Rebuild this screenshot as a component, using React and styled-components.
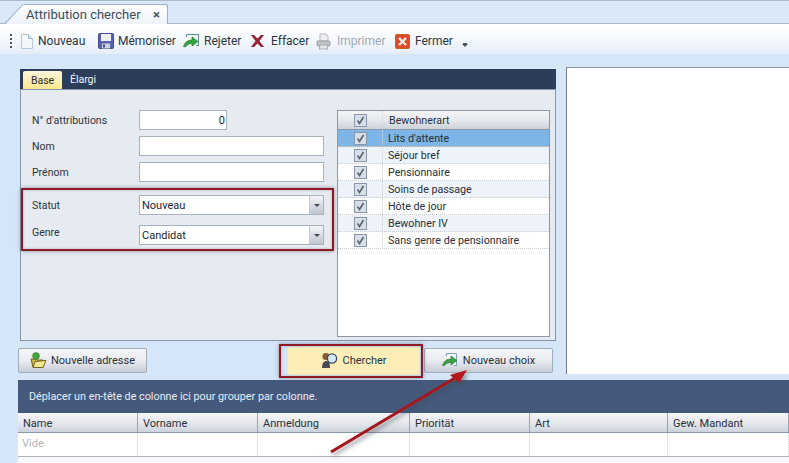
import React from "react"
import styled, { createGlobalStyle } from "styled-components"

const Global = createGlobalStyle`
  html, body { margin: 0; padding: 0; }
  body {
    width: 789px;
    height: 463px;
    overflow: hidden;
    background: #d6e6f9;
    font-family: Roboto, "Liberation Sans", Arial, sans-serif;
    font-size: 11px;
    color: #1e2530;
  }
`

const Page = styled.div`
  position: relative;
  width: 789px;
  height: 463px;
  overflow: hidden;
  display: flex;
  flex-direction: column;
`

const TabStrip = styled.div`
  height: 24px;
  flex: none;
  box-sizing: border-box;
  border-top: 1px solid #a9b8cb;
  border-bottom: 1px solid #a7b8cc;
  background: #d9e7f7;
  padding: 3px 0 0 24px;
`

const DocTab = styled.div`
  width: 144px;
  height: 20px;
  box-sizing: border-box;
  position: relative;
  display: flex;
  align-items: center;
  justify-content: space-between;
  padding: 0 7px 0 2px;
  font-size: 13px;
  color: #3c4a5c;
  border: 1px solid #9fb0c6;
  border-left: none;
  border-bottom: none;
  border-radius: 0 3px 0 0;
  background: linear-gradient(#ffffff, #eef4fb);
  &::before {
    content: "";
    position: absolute;
    left: -18px;
    top: -1px;
    width: 18px;
    height: 20px;
    background: linear-gradient(#ffffff, #eef4fb);
    clip-path: polygon(0 100%, 100% 0, 100% 100%);
  }
  &::after {
    content: "";
    position: absolute;
    left: -19px;
    bottom: 0;
    width: 27px;
    height: 1px;
    background: #9fb0c6;
    transform: rotate(-46deg);
    transform-origin: left bottom;
  }
`

const CloseMark = styled.span`
  font-size: 13px;
  color: #46525f;
  font-weight: bold;
`

const Toolbar = styled.div`
  height: 30px;
  flex: none;
  box-sizing: border-box;
  display: flex;
  align-items: center;
  padding: 4px 0 0 10px;
  background: linear-gradient(#ffffff 0%, #f6f9fd 50%, #e4edf8 100%);
`

const Grip = styled.span`
  width: 2px;
  height: 14px;
  margin-right: 8px;
  background: repeating-linear-gradient(#4a5563 0 2px, transparent 2px 4px);
`

const ToolItem = styled.div`
  display: flex;
  align-items: center;
  gap: ${({ $inner }) => $inner}px;
  width: ${({ $w }) => $w}px;
  flex: none;
  font-size: 12px;
  color: ${({ $off }) => ($off ? "#a2a8af" : "#2b3440")};
`

const Overflow = styled.span`
  margin: 8px 0 0 7px;
  width: 0;
  height: 0;
  border: 3px solid transparent;
  border-top: 3px solid #4a5563;
  border-bottom: none;
  box-shadow: 0 -2px 0 -1px #4a5563;
`

const Content = styled.div`
  flex: 1;
  display: flex;
  flex-direction: column;
  padding: 13px 0 0 18px;
`

const TopRow = styled.div`
  display: grid;
  grid-template-columns: 536px 223px;
  column-gap: 10px;
  margin-left: 2px;
  height: 307px;
`

const SearchCol = styled.div`
  display: flex;
  flex-direction: column;
  padding-top: 2px;
`

const Panel = styled.div`
  height: 272px;
  box-sizing: border-box;
  border: 1px solid #8496ad;
  border-top: none;
  background: #e6ebf1;
  display: flex;
  flex-direction: column;
`

const PanelTabs = styled.div`
  height: 20px;
  flex: none;
  margin: 0 -1px;
  background: #2b3d59;
  display: flex;
  align-items: flex-end;
  padding-left: 3px;
  box-shadow: 0 1px 0 #8496ad;
`

const PanelTab = styled.div`
  height: ${({ $active }) => ($active ? 18 : 20)}px;
  width: ${({ $w }) => $w}px;
  margin-right: ${({ $active }) => ($active ? 8 : 0)}px;
  box-sizing: border-box;
  display: flex;
  align-items: center;
  justify-content: center;
  font-size: 10.5px;
  border-radius: 2px 2px 0 0;
  color: ${({ $active }) => ($active ? "#2a2a2a" : "#f2f5f9")};
  background: ${({ $active }) =>
    $active ? "linear-gradient(#fff7dc, #fde690)" : "transparent"};
`

const PanelBody = styled.div`
  flex: 1;
  display: flex;
  justify-content: space-between;
  padding: 21px 5px 3px 11px;
`

const Form = styled.div`
  width: 293px;
  display: flex;
  flex-direction: column;
`

const FormRow = styled.div`
  display: flex;
  align-items: center;
  height: 20px;
  margin-bottom: ${({ $after }) => $after}px;
`

const Label = styled.label`
  width: 107px;
  flex: none;
  font-size: 10.5px;
  color: #2b3440;
  padding-top: ${({ $raise }) => ($raise ? 0 : 1)}px;
  padding-bottom: ${({ $raise }) => $raise || 0}px;
`

const Field = styled.div`
  width: ${({ $w }) => $w}px;
  height: 20px;
  box-sizing: border-box;
  border: 1px solid #a8b2be;
  background: #fff;
  display: flex;
  align-items: center;
  justify-content: ${({ $right }) => ($right ? "flex-end" : "flex-start")};
  padding: 0 ${({ $right }) => ($right ? 1 : 2)}px;
  font-size: 11px;
  color: #1e2530;
`

const Combo = styled(Field)`
  width: 185px;
  justify-content: space-between;
  padding: 0 0 0 2px;
`

const ComboBtn = styled.span`
  width: 13px;
  height: 18px;
  background: linear-gradient(#f3f5f8, #bfc6d0);
  border-left: 1px solid #c3cad3;
  display: flex;
  align-items: center;
  justify-content: center;
  &::after {
    content: "";
    border: 3px solid transparent;
    border-top: 3px solid #3f4854;
    border-bottom: none;
  }
`

const CheckList = styled.div`
  width: 213px;
  box-sizing: border-box;
  border: 1px solid #8c98a8;
  background: #fff;
`

const ListRow = styled.div`
  display: flex;
  align-items: center;
  height: 17px;
  box-sizing: border-box;
  background: ${({ $sel, $alt }) =>
    $sel ? "#7db5e6" : $alt ? "#eef3f9" : "#fff"};
  border-bottom: 1px dotted #c9ced5;
  font-size: 10.7px;
  color: #27303b;
`

const ListHead = styled(ListRow)`
  height: 19px;
  background: linear-gradient(#f4f5f7 0%, #e6e9ee 50%, #ccd2da 100%);
  border-bottom: 1px solid #8c98a8;
`

const CheckCell = styled.div`
  width: 45px;
  flex: none;
  height: 100%;
  display: flex;
  justify-content: center;
  align-items: center;
  padding-left: 1px;
  box-sizing: border-box;
  border-right: 1px dotted #d2d7dd;
`

const ListText = styled.span`
  padding-left: ${({ $head }) => ($head ? 6 : 5)}px;
`

const ButtonRow = styled.div`
  display: flex;
  align-items: center;
  height: 25px;
  margin: 7px 0 0 -2px;
`

const Btn = styled.div`
  width: ${({ $w }) => $w}px;
  height: ${({ $hot }) => ($hot ? 28 : 25)}px;
  margin-left: ${({ $ml }) => $ml}px;
  box-sizing: border-box;
  display: flex;
  align-items: center;
  justify-content: center;
  gap: 4px;
  font-size: 11px;
  color: #27303b;
  border: ${({ $hot }) => ($hot ? "none" : "1px solid #a3adba")};
  border-radius: 2px;
  background: ${({ $hot }) =>
    $hot
      ? "#fdeeb8"
      : "linear-gradient(#f5f6f8 0%, #e9ebef 50%, #c8cdd5 100%)"};
`

const WhitePane = styled.div`
  background: #fff;
  border-left: 1px solid #6d7a8b;
  border-top: 1px solid #8b97a6;
  height: 307px;
  box-sizing: border-box;
`

const Grid = styled.div`
  margin-top: 6px;
  flex: 1;
  background: #f7f9fc;
`

const GroupBar = styled.div`
  height: 33px;
  background: #44597c;
  color: #e8edf4;
  display: flex;
  align-items: center;
  padding: 0 0 1px 11px;
  box-sizing: border-box;
  font-size: 10.8px;
`

const GridHead = styled.div`
  height: 20px;
  box-sizing: border-box;
  display: flex;
  background: linear-gradient(#f4f5f7 0%, #e6e9ee 50%, #ccd3dc 100%);
  border-bottom: 1px solid #8c98a8;
`

const HeadCell = styled.div`
  width: ${({ $w }) => $w}px;
  flex: none;
  box-sizing: border-box;
  display: flex;
  align-items: center;
  padding: 1px 0 0 5px;
  font-size: 11px;
  color: #27303b;
  border-right: 1px solid #9aa5b2;
`

const GridRow = styled.div`
  height: 24px;
  display: flex;
  background: #fff;
  border-bottom: 1px solid #aeb6c0;
  box-sizing: border-box;
`

const RowCell = styled.div`
  width: ${({ $w }) => $w}px;
  flex: none;
  box-sizing: border-box;
  border-right: 1px dotted #ccd1d8;
  padding: 4px 0 0 4px;
  font-size: 11px;
  color: #b0b5bb;
`

// red marks added over the screenshot
const Mark = styled.div`
  position: absolute;
  left: ${({ $x }) => $x}px;
  top: ${({ $y }) => $y}px;
  width: ${({ $w }) => $w}px;
  height: ${({ $h }) => $h}px;
  box-sizing: border-box;
  border: 2px solid #8e1a24;
  box-shadow: 0 0 4px rgba(70, 80, 90, 0.6), inset 0 0 3px rgba(70, 80, 90, 0.35);
  pointer-events: none;
`

const ArrowLayer = styled.svg`
  position: absolute;
  left: 0;
  top: 0;
  pointer-events: none;
`

const Check = () => (
  <svg width="13" height="13" viewBox="0 0 13 13">
    <rect x="0.5" y="0.5" width="12" height="12" fill="#d9dfe9" stroke="#8a97a8" />
    <path d="M3.5 6.5l2 3 4-6.5" fill="none" stroke="#59636f" strokeWidth="1.6" />
  </svg>
)

const IconNew = () => (
  <svg width="14" height="17" viewBox="0 0 14 17">
    <path d="M1.5 1.5h7l4 4v10h-11z" fill="#f3f7fc" stroke="#b4c7de" />
    <path d="M8.5 1.5v4h4" fill="#d6e3f3" stroke="#a4bad6" />
  </svg>
)

const IconSave = () => (
  <svg width="16" height="16" viewBox="0 0 16 16">
    <rect x="0.5" y="0.5" width="15" height="15" rx="1" fill="#5a64ae" stroke="#3f4788" />
    <rect x="3" y="1" width="10" height="7" fill="#eef0f8" />
    <rect x="4" y="10.5" width="8" height="5" fill="#d0d3dc" />
    <rect x="5" y="11.5" width="2" height="3" fill="#3e4a85" />
  </svg>
)

const IconReject = () => (
  <svg width="17" height="15" viewBox="0 0 17 15">
    <path d="M3.5 3V.5h12v11H13" fill="#eef5ee" stroke="#5b8a9e" />
    <path d="M.5 12.5C2 8 5 6 9 6V3l6 4.5L9 12V9.5c-3 0-5 1-6.5 3.5z" fill="#37a23f" stroke="#1c6b26" strokeWidth="0.6" />
  </svg>
)

const IconDelete = () => (
  <svg width="15" height="14" viewBox="0 0 15 14">
    <path d="M1 1h3l3.5 3.5L11 1h3l-4.5 6 4.5 6h-3L7.5 9.5 4 13H1l4.5-6z" fill="#98243a" />
  </svg>
)

const IconPrint = () => (
  <svg width="15" height="17" viewBox="0 0 15 17">
    <path d="M4 1h6l2 2v5H4z" fill="#eceef0" stroke="#b3b7bb" />
    <rect x="1" y="8" width="13" height="5" rx="1" fill="#bfc3c7" stroke="#9a9ea3" />
    <rect x="3.5" y="12" width="8" height="4" fill="#e4e6e8" stroke="#a9adb2" />
  </svg>
)

const IconClose = () => (
  <svg width="15" height="15" viewBox="0 0 15 15">
    <rect x="0.5" y="0.5" width="14" height="14" rx="1" fill="#dd4a2a" stroke="#c4651f" />
    <path d="M4 4l7 7M11 4l-7 7" stroke="#fbeee6" strokeWidth="2.4" />
  </svg>
)

const IconFolder = () => (
  <svg width="17" height="17" viewBox="0 0 17 17">
    <path d="M1 7h5l1 1h6v7H3z" fill="#cdb84e" stroke="#6f6222" />
    <path d="M3 15.5l2-6 11-1-3 7z" fill="#f5e690" stroke="#6f6222" />
    <circle cx="6" cy="4" r="3.4" fill="#43a83a" stroke="#2a7a26" strokeWidth="0.6" />
  </svg>
)

const IconSearch = () => (
  <svg width="17" height="17" viewBox="0 0 17 17">
    <circle cx="5" cy="4.5" r="3.6" fill="#8a5a34" />
    <path d="M1 16c0-5 2-7 4-7s4 2 4 7z" fill="#4f4a52" />
    <circle cx="11" cy="6.5" r="4.6" fill="#d4e8f7" stroke="#39485a" strokeWidth="1.3" />
    <path d="M8 10l-2 4" stroke="#39485a" strokeWidth="2" />
  </svg>
)

const IconChoice = () => (
  <svg width="17" height="15" viewBox="0 0 17 15">
    <path d="M4.5 3V.5h10v12H12" fill="#f2f7f2" stroke="#7f9fb4" />
    <path d="M.5 12.5C2 8 5 6 9 6V3l6 4.5L9 12V9.500c-3 0-5 1-6.500 3z" fill="#3ba343" stroke="#1f7228" strokeWidth="0.6" />
  </svg>
)

const statuses = [
  "Lits d'attente",
  "Séjour bref",
  "Pensionnaire",
  "Soins de passage",
  "Hôte de jour",
  "Bewohner IV",
  "Sans genre de pensionnaire",
]

const columns = [
  ["Name", 120],
  ["Vorname", 120],
  ["Anmeldung", 152],
  ["Priorität", 120],
  ["Art", 138],
  ["Gew. Mandant", 121],
]

const App = () => (
  <Page>
    <Global />
    <TabStrip>
      <DocTab>
        Attribution chercher
        <CloseMark>×</CloseMark>
      </DocTab>
    </TabStrip>
    <Toolbar>
      <Grip />
      <ToolItem $w={78} $inner={4}>
        <IconNew />
        Nouveau
      </ToolItem>
      <ToolItem $w={85} $inner={4}>
        <IconSave />
        Mémoriser
      </ToolItem>
      <ToolItem $w={67} $inner={4}>
        <IconReject />
        Rejeter
      </ToolItem>
      <ToolItem $w={66} $inner={6}>
        <IconDelete />
        Effacer
      </ToolItem>
      <ToolItem $w={79} $inner={6} $off>
        <IconPrint />
        Imprimer
      </ToolItem>
      <ToolItem $w={60} $inner={5}>
        <IconClose />
        Fermer
      </ToolItem>
      <Overflow />
    </Toolbar>
    <Content>
      <TopRow>
        <SearchCol>
          <Panel>
            <PanelTabs>
              <PanelTab $active $w={39}>Base</PanelTab>
              <PanelTab $w={26}>Élargi</PanelTab>
            </PanelTabs>
            <PanelBody>
              <Form>
                <FormRow $after={6}>
                  <Label>N° d'attributions</Label>
                  <Field $w={88} $right>0</Field>
                </FormRow>
                <FormRow $after={6}>
                  <Label>Nom</Label>
                  <Field $w={185} />
                </FormRow>
                <FormRow $after={13}>
                  <Label>Prénom</Label>
                  <Field $w={185} />
                </FormRow>
                <FormRow $after={10}>
                  <Label>Statut</Label>
                  <Combo>
                    Nouveau
                    <ComboBtn />
                  </Combo>
                </FormRow>
                <FormRow>
                  <Label $raise={6}>Genre</Label>
                  <Combo>
                    Candidat
                    <ComboBtn />
                  </Combo>
                </FormRow>
              </Form>
              <CheckList>
                <ListHead>
                  <CheckCell>
                    <Check />
                  </CheckCell>
                  <ListText $head>Bewohnerart</ListText>
                </ListHead>
                {statuses.map((name, i) => (
                  <ListRow key={name} $sel={i === 0} $alt={i % 2 === 1}>
                    <CheckCell>
                      <Check />
                    </CheckCell>
                    <ListText>{name}</ListText>
                  </ListRow>
                ))}
              </CheckList>
            </PanelBody>
          </Panel>
          <ButtonRow>
            <Btn $w={129} $ml={0}>
              <IconFolder />
              Nouvelle adresse
            </Btn>
            <Btn $w={132} $ml={141} $hot>
              <IconSearch />
              Chercher
            </Btn>
            <Btn $w={129} $ml={4}>
              <IconChoice />
              Nouveau choix
            </Btn>
          </ButtonRow>
        </SearchCol>
        <WhitePane />
      </TopRow>
      <Grid>
        <GroupBar>Déplacer un en-tête de colonne ici pour grouper par colonne.</GroupBar>
        <GridHead>
          {columns.map(([name, w]) => (
            <HeadCell key={name} $w={w}>{name}</HeadCell>
          ))}
        </GridHead>
        <GridRow>
          {columns.map(([name, w], i) => (
            <RowCell key={name} $w={w}>{i === 0 ? "Vide" : ""}</RowCell>
          ))}
        </GridRow>
      </Grid>
    </Content>
    <Mark $x={21} $y={188} $w={313} $h={63} />
    <Mark $x={279} $y={344} $w={144} $h={34} />
    <ArrowLayer width="789" height="463" viewBox="0 0 789 463">
      <defs>
        <filter id="soft" x="-20%" y="-20%" width="140%" height="140%">
          <feDropShadow dx="2" dy="3" stdDeviation="2" floodColor="#404650" floodOpacity="0.55" />
        </filter>
      </defs>
      <g filter="url(#soft)">
        <path d="M331 452L455 378" stroke="#a5161c" strokeWidth="3" />
        <path d="M467 370L450 375L459 383z" fill="#b51218" />
      </g>
    </ArrowLayer>
  </Page>
)

export default App
